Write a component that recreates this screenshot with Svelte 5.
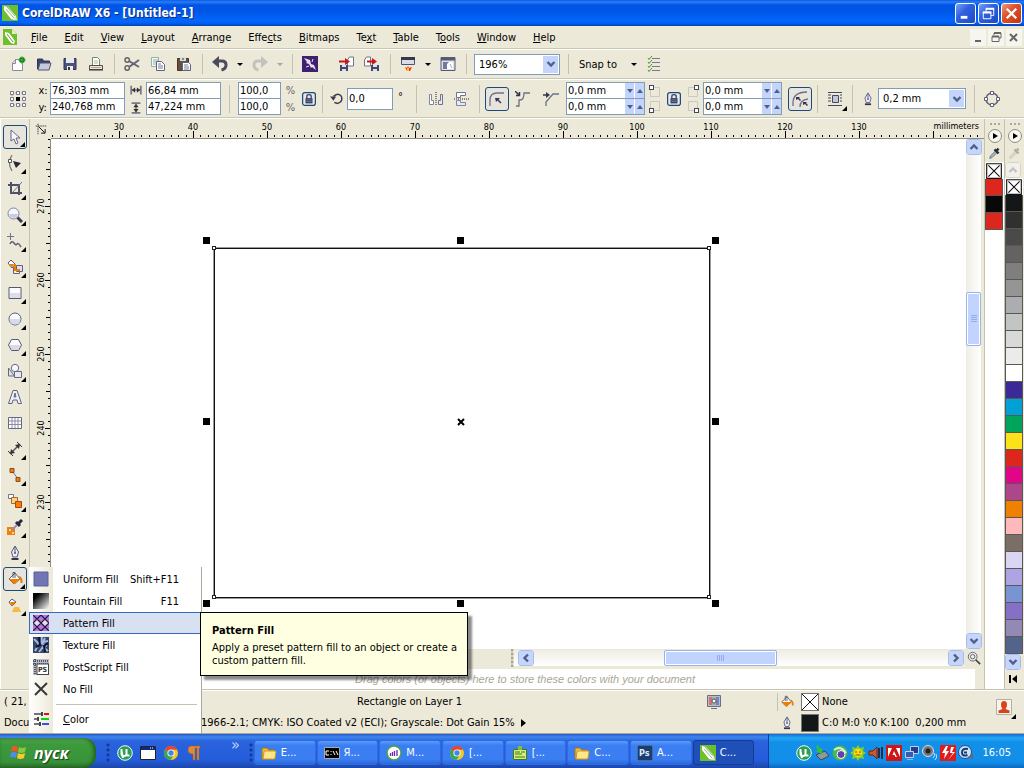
<script>
  const menus = [
    ['', 'F', 'ile'], ['', 'E', 'dit'], ['', 'V', 'iew'], ['', 'L', 'ayout'], ['', 'A', 'rrange'],
    ['Effe', 'c', 'ts'], ['', 'B', 'itmaps'], ['Te', 'x', 't'], ['', 'T', 'able'], ['T', 'o', 'ols'],
    ['', 'W', 'indow'], ['', 'H', 'elp']
  ];

  const bucket = '<path d="M2 8l6-6 5 6-6 5z" fill="#fff" stroke="#555a72"/><path d="M2 8h11l-5 5H7z" fill="#f27e00"/><path d="M6 7V1.500h2V7" fill="none" stroke="#555a72"/><path d="M12 6q3 1 2.500 6" fill="none" stroke="#e87c10" stroke-width="2"/>';
  const pen = '<path d="M8 1L4.500 7l1.500 5h4l1.500-5z" fill="#eef" stroke="#555a72"/><path d="M8 2v6" stroke="#555a72"/><circle cx="8" cy="8" r="1" fill="#555a72"/><path d="M4.500 13h7v2h-7z" fill="#33364a"/>';
  const folder = '<path d="M1 4q0-1 1-1h4l2 2h5q1 0 1 1v7q0 1-1 1H2q-1 0-1-1z" fill="#f3b93c" stroke="#a47814"/><path d="M2 14l1-7q0-1 1-1h10q1 0 1 1l-1 6q0 1-1 1z" fill="#ffe68a" stroke="#c9982c"/>';
  const chrome = '<circle cx="8" cy="8" r="7" fill="#f6c91f"/><path d="M8 8L1.900 4.500A7 7 0 0 1 14.100 4.500L8 4.500z" fill="#e2453a"/><path d="M1.900 4.500A7 7 0 0 0 7.500 15L11 9.700 8 8z" fill="#3ba357"/><path d="M1.900 4.500A7 7 0 0 1 14.100 4.500H8z" fill="#e2453a"/><circle cx="8" cy="8" r="3.600" fill="#fff"/><circle cx="8" cy="8" r="2.700" fill="#4086e8"/>';
  const torrent = '<circle cx="8" cy="8" r="7.300" fill="#2d9c55" stroke="#e8fff0"/><path d="M4.500 4v5q0 2 2.500 2t2.500-2V4M9.500 9q0 2 3 1.500M4.500 6l1.500 7" fill="none" stroke="#fff" stroke-width="2"/>';
  const corel = '<path d="M0 0h16v16H0z" fill="#6fbf2a"/><path d="M2 1l4 1 8 9-1 4-4-1-7-9z" fill="#fff"/><path d="M4 4l8 9M5 2l8 9" stroke="#6fa860" stroke-width=".8"/><path d="M11 15l3-4 1 4z" fill="#dfe8d8"/>';
  const dropper = '<path d="M2 14l1-3 6-6 2 2-6 6z" fill="#a9bcc0" stroke="#55707a"/><path d="M8 3l5 5M10 5l3-3" stroke="#2d2d42" stroke-width="3"/>';
  const disk = '<path d="M2 2.500h12v11H2z" fill="#4c5478" stroke="#2f3450"/><path d="M4 2h8v5H4z" fill="#e6e8f2"/><path d="M5 10h6v4H5z" fill="#eee"/><path d="M6 11h2v3H6z" fill="#2f3450"/>';

  const icons = {
    bucket, pen, folder, chrome, torrent, corel, dropper, disk,
    new: '<path d="M2.500 7l3-3.500h7v11h-10z" fill="#fff" stroke="#8a8c9c"/><path d="M2.500 7.500h3v-4" fill="#dde" stroke="#8a8c9c"/><circle cx="12" cy="4" r="3" fill="#188a1c"/><path d="M8 4h8M12 0v8" stroke="#4fb552" stroke-dasharray="2 1"/>',
    open: '<path d="M1.500 13V3h5l1 2h6v3" fill="#3c4568" stroke="#30385a"/><path d="M2 14l2-7h11l-2 7z" fill="#c5cbdc" stroke="#4c5478"/>',
    print: '<path d="M4.500 9V1.500h5l2 2V9" fill="#fff" stroke="#7d8090"/><path d="M6 5h4M6 7h4" stroke="#a8c46c"/><path d="M1.500 9.500h13v4h-13z" fill="#e8e8ee" stroke="#4a4c60"/><path d="M3 11.500h10" stroke="#e39a28"/><path d="M1 14h14" stroke="#333"/>',
    cut: '<path d="M5 5l10 6M5 11l10-7" stroke="#62657a" stroke-width="2"/><circle cx="3.200" cy="4" r="2.200" fill="none" stroke="#666" stroke-width="1.500"/><circle cx="3.200" cy="12" r="2.200" fill="none" stroke="#666" stroke-width="1.500"/>',
    copy: '<path d="M1.500 1.500h7v9h-7z" fill="#f2f6f4" stroke="#95b3ac"/><path d="M3 4h5M3 6h5M3 8h5" stroke="#8fb5a8"/><path d="M6.500 5.500h5l3 3v6h-8z" fill="#fff" stroke="#60637c"/><path d="M8 8h3M8 10h5M8 12h5" stroke="#777b98"/>',
    paste: '<path d="M1.500 2.500h11v12h-11z" fill="#65503c" stroke="#463626"/><path d="M4 1h6v4H4z" fill="#d7dfe0"/><circle cx="7" cy="3" r="1" fill="#478"/><path d="M6.500 6.500h6l2 2v6h-8z" fill="#fff" stroke="#60637c"/><path d="M8 9h4M8 11h5M8 13h5" stroke="#777b98"/>',
    undo: '<path d="M6 5h4q4 0 4 4t-4.500 5" fill="none" stroke="#4a4a5e" stroke-width="3"/><path d="M0 6l7-6v12z" fill="#4a4a5e"/>',
    redo: '<path d="M10 5H6Q2 5 2 9t4.500 5" fill="none" stroke="#c3c3be" stroke-width="3"/><path d="M16 6L9 0v12z" fill="#c3c3be"/>',
    connect: '<path d="M0 0h16v16H0z" fill="#40206e"/><path d="M2 2l6 2 1 4 3 1 2 5-4-3-1 1-2-4-3-1 1-1z" fill="#e8dcf6"/><path d="M11 3l-1 3M4 11l3-1" stroke="#e8dcf6"/>',
    import: '<path d="M9.500 4l2-3h4v9h-6z" fill="#fff" stroke="#707488"/><path d="M2 9h8v6H2z" fill="#3f4870"/><path d="M4 9h4v2H4zM4 13h4v2H4z" fill="#dde"/><path d="M1 5.500h7" stroke="#c8161c" stroke-width="2"/><path d="M7 2l5 3.500L7 9z" fill="#c8161c"/>',
    export: '<path d="M.5 4l2-3h4v9h-6z" fill="#fff" stroke="#707488"/><path d="M7 9h8v6H7z" fill="#3f4870"/><path d="M9 9h4v2H9zM9 13h4v2H9z" fill="#dde"/><path d="M3 5.500h6" stroke="#c8161c" stroke-width="2"/><path d="M8 2l5 3.500L8 9z" fill="#c8161c"/>',
    launcher: '<path d="M1.500 1.500h13v7h-13z" fill="#dcdce4" stroke="#50546a"/><path d="M1 1h14v3H1z" fill="#34384e"/><path d="M5 11l2 1 1-2 1 2 3-1-2 4H7z" fill="#ea3312"/><path d="M7 12h2v3H7z" fill="#ffc21b"/>',
    welcome: '<path d="M1 1.500h14v13H1z" fill="#dfe1ea" stroke="#565a74"/><path d="M1 2h14v2.500H1z" fill="#565a74"/><path d="M3 6h10v7H3z" fill="#707a9c"/><path d="M7 8l2-2h4v7H7z" fill="#fff"/><path d="M10 8l2 4" stroke="#8faec8"/>',
    options: '<path d="M6 2.500h8M6 6.500h8M6 10.500h8M6 14.500h8" stroke="#77798a"/><path d="M2 2l1 1.500L6 0M2 6l1 1.500L6 4M2 10l1 1.500L6 8M2 14l1 1.500L6 12" fill="none" stroke="#4d8d3b"/>',
    origin: '<path d="M2 2h12v12H2z" fill="none" stroke="#9a9caf" stroke-dasharray="2 1"/><g fill="#fff" stroke="#74778f"><path d="M.5 .5h3v3h-3zM6.500 .5h3v3h-3zM12.500 .5h3v3h-3zM.5 6.500h3v3h-3zM12.500 6.500h3v3h-3zM.5 12.500h3v3h-3zM6.500 12.500h3v3h-3zM12.500 12.500h3v3h-3z"/></g><path d="M6 6h4v4H6z"/>',
    width: '<path d="M2.500 3v10M13.500 3v10" stroke="#74778f" stroke-width="2"/><path d="M4 8h8" stroke="#222"/><path d="M3 8l4-3v6zM13 8l-4-3v6z" fill="#333"/>',
    height: '<path d="M3 2.500h10M3 13.500h10" stroke="#74778f" stroke-width="2"/><path d="M8 4v8" stroke="#222"/><path d="M8 3L5 7h6zM8 13L5 9h6z" fill="#333"/>',
    lock: '<rect x=".7" y=".7" width="14.600" height="14.600" rx="2.500" fill="#e6e8e9" stroke="#1d4a78" stroke-width="1.400"/><path d="M5.500 7V5q0-2 2.500-2t2.500 2v2" fill="none" stroke="#3a4060" stroke-width="1.500"/><path d="M4 7h8v6H4z" fill="#343a5c"/><path d="M5 9h6M5 11h6" stroke="#7d85a8"/>',
    rotate: '<path d="M4 5q6-5 9 0 2 6-4 8l-4-1" fill="none" stroke="#3a3c50" stroke-width="1.700"/><path d="M0 7h7L3 2z" fill="#3a3c50" transform="rotate(180 3.500 6)"/>',
    mirrorH: '<path d="M1.500 3.500h2v6h2v4h-4z" fill="#fff" stroke="#8185a0"/><path d="M8 1v14" stroke="#222" stroke-dasharray="1 1"/><path d="M14.500 3.500h-2v6h-2v4h4z" fill="#e6e8f4" stroke="#6f738c"/>',
    mirrorV: '<path d="M3.500 1.500h9v3h-5v2h-4z" fill="#fff" stroke="#6f738c"/><path d="M1 8h15" stroke="#222" stroke-dasharray="1 1"/><path d="M3.500 14.500h9v-3h-5v-2h-4z" fill="#e6e8f4" stroke="#8185a0"/>',
    round: '<path d="M1 15V9q0-7 7-7h7" fill="none" stroke="#6c7086" stroke-width="1.300"/><path d="M6 7h5l-1.500 1.500 3 3-1 1-3-3L7 11z" fill="#34384e"/>',
    scallop: '<path d="M1 15h3V9h1q4 0 4-7h6" fill="none" stroke="#6c7086" stroke-width="1.300"/><path d="M0 0l4 4M4.500 1v3.500H1" fill="none" stroke="#34384e" stroke-width="1.500"/>',
    chamfer: '<path d="M3 15v-4l7-8h6" fill="none" stroke="#6c7086" stroke-width="1.300"/><path d="M0 4h4" stroke="#34384e" stroke-width="1.500"/><path d="M3 1l4 3-4 3z" fill="#34384e"/>',
    relative: '<path d="M1 15V12Q1 1 15 1M8 16q0-7 8-8" fill="none" stroke="#6c7086" stroke-width="1.300"/><path d="M4 6h4L7 7l2 2-1 1-2-2-2 1zM11 11h4l-1 1 2 2-1 1-2-2-2 1z" fill="#34384e"/>',
    wrap: '<path d="M1 1.500h14M1 14.500h14M1 4h3M1 7h3M1 10h3M13 4h2M13 7h2M13 10h2" stroke="#44485e"/><path d="M5.500 4.500h6v7h-6z" fill="#c4c7da" stroke="#44485e"/>',
    curves: '<circle cx="8" cy="8" r="6" fill="none" stroke="#5e6278" stroke-width="1.500"/><g fill="#fff" stroke="#5e6278"><path d="M6.500 .5h3v3h-3zM6.500 12.500h3v3h-3zM.5 6.500h3v3h-3zM12.500 6.500h3v3h-3z"/></g>',
    pick: '<path d="M4 1v11l3-2 2 5 2-1-2-5h4z" fill="#f5f5fb" stroke="#656982"/>',
    shape: '<path d="M5 0Q0 8 5 16" fill="none" stroke="#6c7088" stroke-width="1.200"/><path d="M1.500 4.500h3v3h-3z" fill="#fff" stroke="#555"/><path d="M6 6l8 2-5 5z" fill="#25283a"/>',
    crop: '<path d="M1 4h11v10M4 1v11h11" fill="none" stroke="#4c5068" stroke-width="2"/><path d="M5 12L15 1" stroke="#6f738c"/>',
    zoom: '<path d="M10 10l5 5" stroke="#383b50" stroke-width="3"/><circle cx="6.500" cy="6.500" r="5.500" fill="#f6f7fc" stroke="#7f8399"/><path d="M2 7h9q-1 4-4.500 4T2 7z" fill="#c8cadf"/>',
    freehand: '<path d="M3.500 0v7M0 3.500h7" stroke="#6e728c"/><path d="M3 11q2-4 4-1t3 1 4 3" fill="none" stroke="#5b5f78" stroke-width="1.500"/>',
    smart: '<path d="M1 4l3-3 4 4-3 4z" fill="#fff" stroke="#555a72"/><path d="M2 5h5L5 8z" fill="#f27e00"/><path d="M6.500 8.500h6v6h-6z" fill="#f2f2fb" stroke="#60647c"/><path d="M9.500 6.500h6v6h-6z" fill="#dce0f2" stroke="#60647c"/><path d="M8 5v6h5" fill="none" stroke="#f27e00" stroke-width="2"/>',
    rect: '<path d="M2 2.500h12v11H2z" fill="#fafaff" stroke="#555a72"/><path d="M3 8h10v5H3z" fill="#dcdeea"/>',
    ellipse: '<circle cx="8" cy="8" r="6" fill="#fafaff" stroke="#555a72"/><path d="M2.500 8h11q0 5.500-5.500 5.500T2.500 8z" fill="#d8daea"/>',
    polygon: '<path d="M1.500 8l3-5.500h7l3 5.500-3 5.500h-7z" fill="#fafaff" stroke="#555a72"/><path d="M2.500 8h11L11 13H5z" fill="#d8daea"/>',
    shapes: '<path d="M1.500 5v8h6z" fill="#dcdeea" stroke="#656982"/><circle cx="8" cy="5" r="3.700" fill="#f6f7ff" stroke="#656982"/><path d="M7.500 8.500h7v6h-7z" fill="#e8eaf6" stroke="#656982"/>',
    text: '<path d="M1.500 14.500L6 1.500h4l4.500 13H11L10 11H6l-1 3.500zM7 8h2L8 4z" fill="#eef0fa" fill-rule="evenodd" stroke="#60647c"/>',
    table: '<path d="M1.500 2.500h13v11h-13z" fill="#fff" stroke="#656982"/><path d="M2 6h12M2 9.500h12M5 3v10M8 3v10M11 3v10" stroke="#8b8fa6"/>',
    dimension: '<path d="M3 13L13 3" stroke="#555" stroke-width="1.500"/><path d="M1 10l5 5M10 1l5 5" stroke="#333"/><path d="M3 13l1-5 4 4zM13 3l-1 5-4-4z" fill="#333"/>',
    connector: '<path d="M5 4l7 9" stroke="#6e728a"/><path d="M3 1.500h4v4H3zM9 10.500h4v4H9z" fill="#f27e00" stroke="#8c4c20"/>',
    interactive: '<path d="M1.500 1.500h5v4h-5z" fill="#fff" stroke="#70748c"/><path d="M4.500 4.500h6v6h-6z" fill="#ffd278" stroke="#a06a32"/><path d="M8.500 8.500h6v6h-6z" fill="#ff7800" stroke="#a04a18"/>',
    eyedropper: '<path d="M0 8h8v8H0z" fill="#f08010"/><path d="M2 10h2v2H2zM5 13h2v2H5z" fill="#fbd09c"/><path d="M5 11l5-5" stroke="#8f94ac" stroke-width="2"/><path d="M9 3l4 4M11 5l4-4" stroke="#26283a" stroke-width="3"/>',
    ifill: '<path d="M2 5l3-3 4 3-4 4z" fill="#fff" stroke="#555a72"/><path d="M3 5h6L5 9z" fill="#f27e00"/><path d="M7 10h5l2 5H5z" fill="#f7b948"/>',
    uniform: '<path d="M1 1h14v14H1z" fill="#7175b4" stroke="#5d609c"/>',
    texture: '<path d="M0 0h16v16H0z" fill="#35466e"/><path d="M1 2l5 5-4 7M9 0l-1 6 6 3M6 15l4-5 5 4M12 1l-2 4 5-1" fill="none" stroke="#a6b8de" stroke-width="2"/><path d="M6 0l1 8-4 2M15 6l-4 3 1 6" fill="none" stroke="#0c1430" stroke-width="2"/>',
    none: '<path d="M2 2l12 12M14 2L2 14" stroke="#383838" stroke-width="2"/>',
    sliders: '<path d="M1 3h7M1 8h3M1 13h5" stroke="#6f738a" stroke-width="2"/><path d="M11 3h5" stroke="#e01010" stroke-width="2"/><path d="M8 8h8" stroke="#10d010" stroke-width="2"/><path d="M9 13h7" stroke="#3050f0" stroke-width="2"/><path d="M8 1h2v4H8zM4 6h2v4H4zM6 11h2v4H6z" fill="#444"/>',
    magnifier: '<circle cx="6.500" cy="6.500" r="5" fill="#eee" stroke="#555a6c"/><circle cx="6.500" cy="6.500" r="2.500" fill="none" stroke="#555"/><path d="M10 10l5 5" stroke="#444" stroke-width="2"/>',
    monitor: '<path d="M1.500 1.500h13v11h-13z" fill="#b9bdd0" stroke="#6b6f86"/><path d="M3 3h3v8H3z" fill="#d46f74"/><path d="M6 3h4v8H6z" fill="#98b598"/><path d="M10 3h3v8h-3z" fill="#6e86c6"/><circle cx="8" cy="7" r="2" fill="#fff" stroke="#555"/><path d="M5 14.500h6" stroke="#6b6f86"/>',
    user: '<path d="M.5 .5h15v15H.5z" fill="#f6f4ee" stroke="#b4b0a4"/><path d="M8 2q3 0 3 3.500T9.500 10l4 1.500V14h-11v-2.500l4-1.500Q5 9 5 5.500T8 2z" fill="#d8431c"/>',
    origin2: '<path d="M4 1v14M1 4h14" stroke="#111" stroke-dasharray="2 1"/><path d="M5 5l8 8M13.500 8v5.500H8" fill="none" stroke="#111" stroke-width="1.300"/>',
    window: '<path d="M.5 1.500h15v13H.5z" fill="#fff" stroke="#222"/><path d="M1 2h14v3H1z" fill="#0a2a8a"/><path d="M10 3h1M12 3h1" stroke="#fff"/>',
    pilcrow: '<path d="M5 1h9v2h-1v12h-2V3H9v12H7V9Q2 9 2 5t3-4z" fill="#e08838" stroke="#a85a18" stroke-width=".5"/>',
    console: '<path d="M.5 2.500h15v11H.5z" fill="#000" stroke="#aaa"/><path d="M5 6H2v4h3M7 6v1M7 9v1M9 6l2 4M12 6l2 4" stroke="#fff" fill="none"/>',
    bars: '<circle cx="8" cy="8" r="7" fill="#fff" stroke="#48a348" stroke-width="1.500"/><path d="M4.500 8v3M6.500 7v4M8.500 6v5M11 5v6" stroke="#6a2ca0" stroke-width="1.300"/>',
    note: '<path d="M1.500 4.500h13v10h-13z" fill="#d4ee7a" stroke="#3d7a1a"/><path d="M6 1h4v4H6z" fill="#8bbb3a"/><path d="M3 7h5M9 7h4M3 9h7M3 12h10" stroke="#3d7a1a"/>',
    usb: '<path d="M2 10l9-4 4 5-8 4z" fill="#8d9a9a" stroke="#445"/><path d="M2 1l2 4-3 1 7 3V3L6 4 4 0z" fill="#35c03a"/>',
    globe: '<circle cx="8" cy="8" r="7.500" fill="#49b84a"/><path d="M2 5q7-5 12 3" stroke="#d8f0d0" fill="none" stroke-width="2"/><circle cx="9" cy="9.500" r="4" fill="#6040b0" stroke="#fff"/>',
    flower: '<path d="M8 0l2 3 4-1-1 4 3 2-3 2 1 4-4-1-2 3-2-3-4 1 1-4-3-2 3-2-1-4 4 1z" fill="#7ed321"/><circle cx="8" cy="8" r="4.200" fill="#ffd91c"/><path d="M6 6v2M10 6v2M5.500 10h5" stroke="#865a00"/>',
    volume: '<path d="M1 6h4l4-4v12l-4-4H1z" fill="#c65a30" stroke="#7a1f0c"/><path d="M11 3v10M14 2v12" stroke="#2a0c08" stroke-width="1.500"/>',
    adobe: '<path d="M0 0h16v16H0z" fill="#cf1616"/><path d="M2 3h4l-4 9zM14 3h-4l4 9zM8 6l3 6H9.500l-1-2H6.500z" fill="#fff"/>',
    network: '<path d="M6.500 1.500h8v7h-8z" fill="#22408a" stroke="#c5cee8"/><path d="M1.500 6.500h8v6h-8z" fill="#365ab4" stroke="#c5cee8"/><path d="M3 14.500h6" stroke="#aab"/>',
    speaker: '<circle cx="6" cy="6" r="5.500" fill="#73777c" stroke="#ddd"/><circle cx="6" cy="6" r="2.500" fill="#222"/><path d="M12 8q2 2-1 5M14 9q2 3-1 6" fill="none" stroke="#cde"/>',
    flash: '<path d="M0 0h16v16H0z" fill="#e01b1b"/><path d="M6 1L2 8h3l-1 6 5-8H6l2-5zM14 2h-3l-1 6h3l-5 7 7-8h-3z" fill="#fff"/>',
    disc: '<circle cx="7" cy="7" r="6.500" fill="#cfe2f2" stroke="#1f4c8c"/><path d="M10 4Q4 3 4 7.500T9.500 10M6 7.500h3" fill="none" stroke="#123a7a" stroke-width="2"/><path d="M10 12l5-3v5z" fill="#667"/>',
    page: '<path d="M1 0h9l5 5v11H1z" fill="#6fbf2a"/><path d="M3 3l4 1 6 8-1 3-3-1-6-8z" fill="#fff"/><path d="M5 5l6 8" stroke="#5c9b45"/><path d="M10 0v5h5z" fill="#dfeecb"/>'
  };

  const tools = [
    ['pick', 'Pick'], ['shape', 'Shape'], ['crop', 'Crop'], ['zoom', 'Zoom'], ['freehand', 'Freehand'],
    ['smart', 'Smart Fill'], ['rect', 'Rectangle'], ['ellipse', 'Ellipse'], ['polygon', 'Polygon'],
    ['shapes', 'Basic Shapes'], ['text', 'Text'], ['table', 'Table'], ['dimension', 'Dimension'],
    ['connector', 'Connector'], ['interactive', 'Blend'], ['eyedropper', 'Color Eyedropper'],
    ['pen', 'Outline Pen'], ['bucket', 'Fill'], ['ifill', 'Interactive Fill']
  ];

  const palette = [
    '#141717', '#30302f', '#4a4a4a', '#646362', '#7f7f7f', '#959596', '#abadb0', '#c3c5c4', '#d8dad9',
    '#ebebeb', '#ffffff', '#3a2996', '#00a2d6', '#00a45a', '#fce219', '#de271c', '#e30587', '#ab4889',
    '#f08100', '#ffb9bb', '#7b6e66', '#dad5f3', '#afa4e2', '#7894d2', '#866fc6', '#9389b5', '#52648b'
  ];
  const docPalette = ['#de271c', '#080808', '#de271c'];

  const tasks = [
    ['folder', 'E...'], ['console', 'Я...'], ['bars', 'M...'], ['chrome', '[...'],
    ['note', '[...'], ['folder', 'C...'], ['ps', 'A...'], ['corel', 'C...']
  ];
  const tray = ['torrent', 'usb', 'globe', 'flower', 'volume', 'adobe', 'network', 'speaker', 'flash', 'disc'];

  const fills = [
    ['uniform', 'Uniform Fill', 'Shift+F11'], ['fountain', 'Fountain Fill', 'F11'], ['pattern', 'Pattern Fill', ''],
    ['texture', 'Texture Fill', ''], ['postscript', 'PostScript Fill', ''], ['none', 'No Fill', '']
  ];

  // 10 mm is 74 px at the current zoom; the unit name takes the place of the label at 140
  const hTicks = Array.from({ length: 270 }, (_, i) => {
    const n = i - 9;
    const major = n % 10 === 0;
    return { x: Math.round(68 + n * 7.4), major, label: major && n < 110 ? 30 + n : null };
  });
  const vTicks = Array.from({ length: 66 }, (_, i) => {
    const n = i - 9;
    return { y: Math.round(67 + n * 7.4), half: n % 5 === 0, label: n % 10 === 0 && n < 50 ? 270 - n : null };
  });

  const handles = [[156, 101], [410, 101], [665, 101], [156, 282], [665, 282], [156, 464], [410, 464], [665, 464]];
  const nodes = [[163, 109], [658, 109], [163, 458], [658, 458]];

  let zoom = $state('196%');
  let outline = $state('0,2 mm');
  let activeFill = $state('pattern');
</script>

{#snippet icon(name)}
  <svg class="icon" viewBox="0 0 16 16" aria-hidden="true">
    {#if name === 'ps'}
      <rect width="16" height="16" fill="#1b3d70" stroke="#6f9cd0" />
      <text x="2" y="11" font-size="9" font-weight="bold" fill="#d8ecff">Ps</text>
    {:else if name === 'fountain'}
      <defs><linearGradient id="fountain" x2="1" y2="1"><stop offset=".2" /><stop offset="1" stop-color="#fff" /></linearGradient></defs>
      <rect width="16" height="16" fill="url(#fountain)" />
    {:else if name === 'pattern'}
      <rect width="16" height="16" fill="#b078e0" />
      <path d="M4 4l4 4-4 4-4-4zM12 4l4 4-4 4-4-4z" fill="#e4ddec" />
      <path d="M0 0l4 4 4 4 4 4 4 4M16 0L0 16M0 8l4-4 4-4M8 0l8 8-8 8-8-8" fill="none" stroke="#281438" stroke-width="1.200" />
    {:else if name === 'postscript'}
      <rect width="16" height="16" fill="#b9bcc6" />
      <path d="M0 2h16M0 5h16M2 0v16" stroke="#50546a" stroke-dasharray="1 1" stroke-width="2" />
      <rect x="4" y="5" width="11.500" height="10.500" fill="#fff" stroke="#444" />
      <text x="5" y="13" font-size="7" font-weight="bold" fill="#333">PS</text>
    {:else}
      {@html icons[name]}
    {/if}
  </svg>
{/snippet}

{#snippet chevron(dir)}
  <svg class="chevron {dir}" viewBox="0 0 10 10" aria-hidden="true"><path d="M1.500 3L5 6.500 8.500 3" fill="none" stroke="#4d6185" stroke-width="2.400" /></svg>
{/snippet}

{#snippet tool(name, label)}
  <button class="tool" aria-label={label}>{@render icon(name)}</button>
{/snippet}

{#snippet caret(label, off)}
  <button class="caret" class:off aria-label={label}></button>
{/snippet}

{#snippet pair(a, b, la, lb, spin)}
  <div class="pair">
    {#each [[a, la], [b, lb]] as [value, label]}
      <div class="field">
        <input type="text" {value} aria-label={label} />
        {#if spin}
          <button class="spin" aria-label="{label} down"><i class="down"></i></button>
          <button class="spin" aria-label="{label} up"><i class="up"></i></button>
        {/if}
      </div>
    {/each}
  </div>
{/snippet}

{#snippet cornerMarks(side)}
  <svg class="corners" viewBox="0 0 14 32" aria-hidden="true">
    <g fill="none" stroke="#cbc8c0"><path d="M2.500 4.500h9v9h-9zM2.500 18.500h9v9h-9z" /></g>
    <g fill="#fff" stroke="#44485e"><rect x={side === 'left' ? 1.5 : 8.5} y="2.500" width="4" height="4" /><rect x={side === 'left' ? 1.5 : 8.5} y="25.500" width="4" height="4" /></g>
  </svg>
{/snippet}

<div class="app">
  <header class="title">
    {@render icon('corel')}
    <h1>CorelDRAW X6 - [Untitled-1]</h1>
    <button class="win" aria-label="Minimize"><svg viewBox="0 0 20 20"><path d="M5 14h7" stroke="#fff" stroke-width="3" /></svg></button>
    <button class="win" aria-label="Restore"><svg viewBox="0 0 20 20"><path d="M7.500 8V5h8v7h-3M4.500 8.500h8v7h-8z" fill="none" stroke="#fff" /><path d="M7 5h9M4 9h9" stroke="#fff" stroke-width="2" /></svg></button>
    <button class="win close" aria-label="Close"><svg viewBox="0 0 20 20"><path d="M5 5l10 10M15 5L5 15" stroke="#fff" stroke-width="2.500" /></svg></button>
  </header>

  <nav class="menubar">
    {@render icon('page')}
    {#each menus as [a, key, b]}
      <button>{a}<u>{key}</u>{b}</button>
    {/each}
    <div class="doc-buttons">
      <button aria-label="Minimize document"><svg viewBox="0 0 16 16"><path d="M5 12h6" stroke="#666" stroke-width="2" /></svg></button>
      <button aria-label="Restore document"><svg viewBox="0 0 16 16"><path d="M6 6V4h7v5h-2M4 7.500h7v5H4z" fill="none" stroke="#666" /><path d="M6 4h7M4 7.500h7" stroke="#666" stroke-width="2" /></svg></button>
      <button aria-label="Close document"><svg viewBox="0 0 16 16"><path d="M4 5l7 7M11 5l-7 7" stroke="#666" stroke-width="2" /></svg></button>
    </div>
  </nav>

  <div class="bar standard">
    {@render tool('new', 'New')}
    {@render tool('open', 'Open')}
    {@render tool('disk', 'Save')}
    {@render tool('print', 'Print')}
    <span class="sep"></span>
    {@render tool('cut', 'Cut')}
    {@render tool('copy', 'Copy')}
    {@render tool('paste', 'Paste')}
    <span class="sep"></span>
    {@render tool('undo', 'Undo')}
    {@render caret('Undo list')}
    {@render tool('redo', 'Redo')}
    {@render caret('Redo list', true)}
    <span class="sep"></span>
    {@render tool('connect', 'Search content')}
    <span class="sep blank"></span>
    {@render tool('import', 'Import')}
    {@render tool('export', 'Export')}
    <span class="sep"></span>
    {@render tool('launcher', 'Application launcher')}
    {@render caret('Applications')}
    {@render tool('welcome', 'Welcome screen')}
    <span class="sep"></span>
    <div class="combo zoom">
      <select aria-label="Zoom level" bind:value={zoom}><option>196%</option><option>100%</option></select>
      <span class="drop">{@render chevron('down')}</span>
    </div>
    <span class="sep"></span>
    <button class="snap">Snap to <i class="tri"></i></button>
    {@render tool('options', 'Options')}
  </div>

  <div class="bar property">
    {@render tool('origin', 'Object origin')}
    <div class="stack"><span>x:</span><span>y:</span></div>
    {@render pair('76,303 mm', '240,768 mm', 'x', 'y')}
    <div class="stack small">{@render icon('width')}{@render icon('height')}</div>
    {@render pair('66,84 mm', '47,224 mm', 'Width', 'Height')}
    <span class="sep"></span>
    {@render pair('100,0', '100,0', 'Scale x', 'Scale y')}
    <div class="stack percent"><span>%</span><span>%</span></div>
    <button class="lock" aria-label="Lock ratio">{@render icon('lock')}</button>
    <span class="sep"></span>
    <div class="stack small">{@render icon('rotate')}</div>
    <input class="angle" type="text" value="0,0" aria-label="Angle of rotation" />
    <span class="degree">°</span>
    <span class="sep"></span>
    {@render tool('mirrorH', 'Mirror horizontally')}
    {@render tool('mirrorV', 'Mirror vertically')}
    <span class="sep"></span>
    <button class="tool on" aria-label="Round corner">{@render icon('round')}</button>
    {@render tool('scallop', 'Scalloped corner')}
    {@render tool('chamfer', 'Chamfered corner')}
    {@render pair('0,0 mm', '0,0 mm', 'Top left radius', 'Bottom left radius', true)}
    {@render cornerMarks('left')}
    <button class="lock" aria-label="Edit corners together">{@render icon('lock')}</button>
    {@render cornerMarks('right')}
    {@render pair('0,0 mm', '0,0 mm', 'Top right radius', 'Bottom right radius', true)}
    <button class="tool on last" aria-label="Relative corner scaling">{@render icon('relative')}</button>
    <span class="sep"></span>
    <button class="tool flyout" aria-label="Wrap text">{@render icon('wrap')}</button>
    <span class="sep"></span>
    <div class="stack small">{@render icon('pen')}</div>
    <div class="combo">
      <select aria-label="Outline width" bind:value={outline}><option>0,2 mm</option><option>0,5 mm</option></select>
      <span class="drop">{@render chevron('down')}</span>
    </div>
    <span class="sep"></span>
    {@render tool('curves', 'Convert to curves')}
  </div>

  <div class="body">
    <div class="workspace">
      <div class="toolbox">
        {#each tools as [name, label]}
          <button
            class="tool"
            class:on={name === 'pick' || name === 'bucket'}
            class:flyout={name !== 'text' && name !== 'table'}
            aria-label={label}
          >{@render icon(name)}</button>
        {/each}
      </div>

      <main class="drawing">
        <div class="ruler-corner">{@render icon('origin2')}</div>
        <div class="hruler">
          <svg>
            {#each hTicks as t}
              <rect x={t.x} y={t.major ? 12 : 16} width="1" height={t.major ? 8 : 2} />
              {#if t.label}<text x={t.x} y="11" text-anchor="middle">{t.label}</text>{/if}
            {/each}
          </svg>
          <span class="unit">millimeters</span>
        </div>
        <div class="vruler">
          <svg>
            {#each vTicks as t}
              <rect x={t.label ? 15 : t.half ? 16 : 18} y={t.y} width={t.label ? 5 : t.half ? 4 : 2} height="1" />
              {#if t.label}<text transform="translate(14 {t.y}) rotate(-90)" text-anchor="middle">{t.label}</text>{/if}
            {/each}
          </svg>
        </div>
        <div class="canvas">
          <svg aria-label="Drawing page">
            <rect x="163" y="109" width="496" height="350" fill="none" stroke="#999" stroke-width="2" />
            <rect x="163.500" y="109.500" width="495" height="349" fill="none" stroke="#111" />
            {#each handles as [x, y]}<rect x={x - 4} y={y - 3} width="7" height="7" />{/each}
            {#each nodes as [x, y]}<rect x={x - 1.5} y={y - 1.5} width="3" height="3" fill="#fff" stroke="#222" />{/each}
            <path d="M407 280l6 6M413 280l-6 6" stroke="#000" stroke-width="2" />
          </svg>
        </div>
        <div class="scroll vertical">
          <button aria-label="Scroll up">{@render chevron('up')}</button>
          <span class="track before"></span>
          <span class="thumb"></span>
          <span class="track"></span>
          <button aria-label="Scroll down">{@render chevron('down')}</button>
        </div>
        <div class="bottom">
          <div class="pages"></div>
          <div class="scroll horizontal">
            <button aria-label="Scroll left">{@render chevron('left')}</button>
            <span class="track before"></span>
            <span class="thumb"></span>
            <span class="track"></span>
            <button aria-label="Scroll right">{@render chevron('right')}</button>
          </div>
          <button class="nav" aria-label="Navigator">{@render icon('magnifier')}</button>
        </div>
        <div class="doc-colors">Drag colors (or objects) here to store these colors with your document</div>
      </main>

      {#each [docPalette, palette] as colors, i}
        <aside class="colors">
          <div class="grip"></div>
          <button class="play" aria-label="Palette menu"><i></i></button>
          <button class="pick" class:off={i === 1} aria-label="Pick color">{@render icon('dropper')}</button>
          {#if i === 1}<button class="step off" aria-label="Previous colors">{@render chevron('up')}</button>{/if}
          <button class="swatch empty" aria-label="No color"><svg viewBox="0 0 16 16"><path d="M1.500 1.500h13v13h-13zM3 3l10 10M13 3L3 13" fill="none" stroke="#111" /></svg></button>
          {#each colors as color}
            <button class="swatch" style:background={color} aria-label={color}></button>
          {/each}
          {#if i === 1}
            <button class="step" aria-label="Next colors">{@render chevron('down')}</button>
            <button class="rewind" aria-label="Expand palette"><svg viewBox="0 0 10 10"><path d="M1 1h2v8H1zM9 1v8L4 5z" /></svg></button>
          {/if}
        </aside>
      {/each}
    </div>

    <footer class="status">
      <span class="coords">( 21,</span>
      <span class="object">Rectangle on Layer 1</span>
      <span class="proof">{@render icon('monitor')}</span>
      <span class="paint divided">{@render icon('bucket')}<svg class="chip" viewBox="0 0 16 16"><path d="M0 0l16 16M16 0L0 16" stroke="#111" /></svg>None</span>
      <span class="profile"><span>Docu</span>1966-2.1; CMYK: ISO Coated v2 (ECI); Grayscale: Dot Gain 15% <i></i></span>
      <span class="paint">{@render icon('pen')}<span class="chip black"></span>C:0 M:0 Y:0 K:100 &nbsp;0,200 mm</span>
      <button class="tool flyout account" aria-label="Account">{@render icon('user')}</button>
    </footer>

    <div class="flyout-menu" role="menu">
      {#each fills as [name, label, key]}
        <button role="menuitem" class:active={activeFill === name} onclick={() => (activeFill = name)}>
          {@render icon(name)}<span>{label}</span><kbd>{key}</kbd>
        </button>
      {/each}
      <hr />
      <button role="menuitem">{@render icon('sliders')}<span><u>C</u>olor</span></button>
    </div>

    <div class="tooltip" role="tooltip">
      <strong>Pattern Fill</strong>
      <p>Apply a preset pattern fill to an object or create a custom pattern fill.</p>
    </div>
  </div>

  <div class="taskbar">
    <button class="start">
      <svg viewBox="0 0 20 20" aria-hidden="true">
        <path d="M3 4q3-2 6 0L8 9q-3-2-6 0z" fill="#f0552a" /><path d="M10 4q3 2 7 0l-1 5q-4 2-7 0z" fill="#86c93c" />
        <path d="M2 10q3-2 6 0l-1 5q-3-2-6 0z" fill="#4f8cf0" /><path d="M9 10q3 2 7 0l-1 5q-4 2-7 0z" fill="#fbc92c" />
      </svg>
      пуск
    </button>
    <div class="quick">
      <span class="dots"></span>
      {#each ['torrent', 'window', 'chrome', 'pilcrow'] as name}
        <button aria-label={name}>{@render icon(name)}</button>
      {/each}
      <span class="more">»</span>
      <span class="dots"></span>
    </div>
    <div class="tasks">
      {#each tasks as [name, label], i}
        <button class:current={i === tasks.length - 1}>{@render icon(name)}{label}</button>
      {/each}
    </div>
    <div class="tray">
      {#each tray as name}{@render icon(name)}{/each}
      <time>16:05</time>
    </div>
  </div>
</div>

<style>
  :global(body) {
    margin: 0;
    overflow: hidden;
  }

  .app {
    display: flex;
    flex-direction: column;
    min-height: 100vh;
    background: #ece9d8;
    color: #000;
    font: 11px/13px "DejaVu Sans Condensed", "DejaVu Sans", sans-serif;
    cursor: default;
  }

  .app * { box-sizing: border-box; }

  button, input, select {
    margin: 0;
    padding: 0;
    border: 0;
    border-radius: 0;
    background: none;
    color: inherit;
    font: inherit;
  }

  svg { display: block; }

  .icon {
    width: 16px;
    height: 16px;
    flex: none;
  }

  .chevron { width: 10px; height: 10px; }
  .chevron.up { transform: rotate(180deg); }
  .chevron.left { transform: rotate(90deg); }
  .chevron.right { transform: rotate(-90deg); }

  /* title */
  .title {
    display: flex;
    align-items: center;
    height: 26px;
    padding: 0 2px;
    gap: 2px;
    background: linear-gradient(#0a5ce6 0, #2a7cf6 2px, #0054e3 5px, #0056e8 12px, #0266fe 20px, #0262f4 23px, #0140b4 26px);
  }

  h1 {
    flex: 1;
    margin: 0;
    padding-left: 2px;
    color: #fff;
    font-size: 12px;
    font-weight: bold;
    text-shadow: 1px 1px #0a2c7c;
  }

  .win {
    width: 21px;
    height: 21px;
    border: 1px solid #fff;
    border-radius: 3px;
    background: linear-gradient(135deg, #7ba0f5, #2f62e0 40%, #1c49c8);
  }

  .close { background: linear-gradient(135deg, #f0987c, #e0512c 40%, #c23412); }

  /* menu */
  .menubar {
    display: flex;
    align-items: center;
    height: 23px;
    padding: 0 2px;
    border-bottom: 1px solid #cac6b4;
  }

  .menubar > button {
    margin-left: 17px;
    height: 20px;
  }

  .menubar .icon + button { margin-left: 13px; }

  .doc-buttons {
    display: flex;
    gap: 2px;
    margin-left: auto;
  }

  .doc-buttons button {
    width: 16px;
    height: 17px;
    background: #f6f5ee;
  }

  /* bars */
  .bar {
    align-items: center;
    border-top: 1px solid #fff;
    border-bottom: 1px solid #cac6b4;
  }

  .standard {
    display: flex;
    height: 30px;
    padding-left: 5px;
  }

  .property {
    display: grid;
    grid-template-columns:
      36px 14px 75px 21px 75px 17px 43px 19px 18px 8px 21px 46px 15px 16px 24px 26px 10px
      26px 26px 30px 79px 20px 18px 20px 79px 30px 10px 26px 9px 21px 88px 16px 20px;
    justify-items: center;
    height: 39px;
  }

  .tool {
    display: grid;
    place-items: center;
    position: relative;
    width: 26px;
    height: 26px;
    flex: none;
  }

  .tool.on {
    width: 24px;
    height: 24px;
    border: 1px solid #1c4a7c;
    border-radius: 3px;
    background: #e6e4dc;
  }

  .last { justify-self: end; }

  .flyout::after {
    content: '';
    position: absolute;
    right: 1px;
    bottom: 1px;
    border-left: 5px solid transparent;
    border-bottom: 5px solid #000;
  }

  .sep {
    width: 10px;
    height: 20px;
    flex: none;
    background: linear-gradient(#c5c2b0, #c5c2b0) center / 1px 100% no-repeat;
  }

  .property .sep { width: 8px; height: 28px; }
  .sep.blank { background: none; }

  .caret {
    width: 14px;
    height: 26px;
    display: grid;
    place-items: center;
  }

  .caret::after, .tri {
    content: '';
    border: 3px solid transparent;
    border-top-color: #000;
    border-bottom: 0;
  }

  .caret.off::after { border-top-color: #aaa79a; }

  .combo {
    position: relative;
    width: 88px;
    height: 21px;
    border: 1px solid #7f9db9;
    background: #fff;
  }

  .combo.zoom { width: 86px; margin: 0 3px; }

  .combo select {
    appearance: none;
    width: 100%;
    height: 100%;
    padding-left: 4px;
  }

  .drop {
    position: absolute;
    top: 1px;
    right: 1px;
    bottom: 1px;
    width: 15px;
    display: grid;
    place-items: center;
    background: #c5d4fb;
    pointer-events: none;
  }

  .snap {
    display: flex;
    align-items: center;
    gap: 14px;
    margin: 0 4px 0 6px;
  }

  .stack {
    display: flex;
    flex-direction: column;
    gap: 4px;
  }

  .small .icon { width: 14px; height: 14px; }
  .percent { color: #666; }
  .lock .icon { width: 14px; height: 14px; }
  .corners { width: 14px; height: 32px; }

  .degree {
    align-self: start;
    padding-top: 10px;
  }

  .pair {
    width: 100%;
    border: 1px solid #7f9db9;
    background: #fff;
  }

  .field {
    display: flex;
    height: 15px;
    gap: 1px;
  }

  .field + .field {
    height: 16px;
    border-top: 1px solid #7f9db9;
  }

  .field input {
    flex: 1;
    min-width: 0;
    padding-left: 1px;
  }

  .spin {
    display: grid;
    place-items: center;
    width: 9px;
    background: #c5d4fb;
  }

  .spin i { border: 3px solid transparent; }
  .spin .down { border-top: 4px solid #4d6185; border-bottom: 0; }
  .spin .up { border-bottom: 4px solid #4d6185; border-top: 0; }

  .angle {
    width: 100%;
    height: 22px;
    padding-left: 1px;
    border: 1px solid #7f9db9;
    background: #fff;
  }

  /* workspace */
  .body {
    display: flex;
    flex: 1;
    flex-direction: column;
    position: relative;
  }

  .workspace {
    display: flex;
    flex: 1;
    border-top: 1px solid #fff;
    border-bottom: 1px solid #c5c2b0;
  }

  .toolbox {
    display: flex;
    flex-direction: column;
    align-items: center;
    gap: 2px;
    width: 30px;
    padding-top: 6px;
    border-left: 1px solid #fff;
    border-right: 1px solid #c5c2b0;
  }

  .toolbox .tool { width: 24px; height: 24px; }

  .drawing {
    display: grid;
    flex: 1;
    grid-template: 20px 1fr 20px 20px / 21px 1fr 18px;
    min-width: 0;
  }

  .ruler-corner {
    display: grid;
    place-items: center;
  }

  .ruler-corner .icon { width: 12px; height: 12px; }

  .hruler {
    grid-column: 2 / 4;
    position: relative;
    padding-right: 6px;
    border-bottom: 1px solid #8f8c7e;
  }

  .hruler svg, .vruler svg, .canvas svg {
    width: 100%;
    height: 100%;
    overflow: hidden;
  }

  .hruler text, .vruler text { font-size: 9px; }

  .unit {
    position: absolute;
    top: 1px;
    right: 5px;
    font-size: 9px;
    line-height: 12px;
  }

  .vruler { border-right: 1px solid #8f8c7e; }

  .vruler, .canvas {
    position: relative;
    overflow: hidden;
  }

  .vruler svg, .canvas svg { position: absolute; }
  .canvas { background: #fff; }

  .scroll {
    display: flex;
    background: #f7f6f0;
  }

  .scroll button, .step {
    display: grid;
    place-items: center;
    flex: none;
    width: 16px;
    height: 16px;
    border: 1px solid #fff;
    border-radius: 3px;
    outline: 1px solid #a9bdea;
    outline-offset: -1px;
    background: #c5d5fc;
  }

  .track { flex: 1; }

  .thumb {
    flex: none;
    border: 1px solid #98b2ea;
    border-radius: 2px;
    box-shadow: inset 0 0 0 1px #fff;
  }

  .vertical {
    flex-direction: column;
    align-items: center;
    border-right: 3px solid #ece9d8;
    background: linear-gradient(90deg, #eeede5, #fff);
  }

  .vertical .before { flex: none; height: 137px; }

  .vertical .thumb {
    width: 15px;
    height: 54px;
    background: repeating-linear-gradient(#8eaaf0 0 1px, transparent 1px 2px) center / 6px 8px no-repeat, #c2d3fd;
  }

  .bottom {
    grid-column: 1 / 4;
    display: flex;
    align-items: center;
    border-bottom: 2px solid #ece9d8;
  }

  .pages {
    flex: 0 0 484px;
    align-self: stretch;
    background: radial-gradient(circle at 1px 2px, #aaa798 1px, transparent 2px) right / 3px 4px repeat-y;
  }

  .horizontal {
    flex: 1;
    padding-left: 4px;
    background: linear-gradient(#eeede5, #fff);
  }

  .horizontal .before { flex: none; width: 130px; }

  .horizontal .thumb {
    width: 113px;
    height: 16px;
    background: repeating-linear-gradient(90deg, #8eaaf0 0 1px, transparent 1px 2px) center / 8px 6px no-repeat, #c2d3fd;
  }

  .nav { width: 20px; padding-left: 3px; }
  .nav .icon { width: 14px; height: 14px; }

  .doc-colors {
    grid-column: 1 / 4;
    padding-left: 45px;
    border-right: 9px solid #ece9d8;
    background: #fff;
    color: #a9a695;
    font-family: "Liberation Sans", Arial, sans-serif;
    font-style: italic;
    line-height: 20px;
    text-align: center;
  }

  /* palettes */
  .colors {
    display: flex;
    flex-direction: column;
    width: 20px;
    border-left: 1px solid #c5c2b0;
    background: #fff;
  }

  .colors + .colors { background: #ece9d8; }

  .grip {
    height: 8px;
    background: radial-gradient(circle at 2px 1px, #aca899 1px, transparent 2px) center 3px / 4px 3px no-repeat, #ece9d8;
    background: repeating-linear-gradient(90deg, #aca899 0 2px, transparent 2px 4px) center 4px / 10px 2px no-repeat, #ece9d8;
  }

  .play {
    display: grid;
    place-items: center;
    height: 18px;
    background: #ece9d8;
  }

  .play i {
    width: 14px;
    height: 14px;
    border: 1px solid #8e8b80;
    border-radius: 50%;
    background: #f8f7f2;
  }

  .play i::after {
    content: '';
    display: block;
    margin: 3px 0 0 4px;
    border-left: 5px solid #000;
    border-top: 3px solid transparent;
    border-bottom: 3px solid transparent;
  }

  .pick {
    display: grid;
    place-items: center;
    height: 17px;
    background: #ece9d8;
  }

  .pick .icon { width: 13px; height: 13px; }
  .pick.off .icon { opacity: .3; filter: grayscale(1); }

  .step.off { background: #f2f0e8; outline-color: #d8d5c6; }
  .step.off .chevron { opacity: .3; }

  .swatch {
    flex: none;
    width: 18px;
    height: 17px;
    border: 1px solid #585858;
    border-top: 0;
  }

  .empty { background: #fff; border: 0; }

  .rewind {
    display: grid;
    place-items: center;
    width: 16px;
    height: 18px;
  }

  .rewind svg { width: 10px; height: 10px; }

  /* status */
  .status {
    display: grid;
    grid-template: 21px 21px / 201px 1fr 160px 206px 40px;
    align-items: center;
    height: 44px;
    border-top: 1px solid #fff;
    border-bottom: 1px solid #aca899;
  }

  .coords { padding-left: 4px; }
  .object { text-align: center; }
  .proof { padding-left: 88px; }

  .paint {
    display: flex;
    align-items: center;
    gap: 3px;
  }

  .divided { box-shadow: -1px 0 #c5c2b0; }

  .paint .icon { margin: 0 4px 0 2px; width: 14px; height: 14px; }

  .chip {
    width: 18px;
    height: 18px;
    border: 1px solid #777;
    background: #fff;
  }

  .black { background: #141717; }

  .profile {
    grid-column: 1 / 4;
    grid-row: 2;
    display: flex;
    align-items: center;
    white-space: nowrap;
  }

  .profile span {
    width: 201px;
    padding-left: 4px;
  }

  .profile i {
    margin-left: 6px;
    border-left: 5px solid #000;
    border-top: 4px solid transparent;
    border-bottom: 4px solid transparent;
  }

  .status .paint { grid-column: 4; }

  .account {
    grid-column: 5;
    grid-row: 1 / 3;
    align-self: start;
    justify-self: center;
    margin-top: 3px;
  }

  /* fill menu */
  .flyout-menu {
    position: absolute;
    left: 29px;
    bottom: 1px;
    width: 173px;
    padding: 1px 0 3px;
    border-right: 1px solid #aca899;
    background: linear-gradient(90deg, #fff, #ece9d8 24px, #fff 24px);
  }

  .flyout-menu button {
    display: flex;
    align-items: center;
    width: 100%;
    height: 22px;
    padding: 0 21px 0 3px;
    border: 1px solid transparent;
    text-align: left;
  }

  .flyout-menu .active {
    border-color: #316ac5;
    background: #d8e1f2;
  }

  .flyout-menu span { flex: 1; padding-left: 14px; }
  .flyout-menu kbd { font: inherit; }

  .flyout-menu hr {
    margin: 4px 4px 3px 27px;
    border: 0;
    border-top: 1px solid #c5c2b0;
  }

  .tooltip {
    position: absolute;
    left: 200px;
    bottom: 58px;
    width: 268px;
    height: 64px;
    padding: 11px 4px 11px 11px;
    border: 1px solid #000;
    background: #ffffe1;
    box-shadow: 4px 4px 2px rgba(0, 0, 0, .45);
  }

  .tooltip p { margin: 4px 0 0; }

  /* taskbar */
  .taskbar {
    display: flex;
    align-items: stretch;
    height: 34px;
    background: linear-gradient(#2458c8 0, #3f86ee 3px, #2a63dc 7px, #245cdb 26px, #1c46a8);
    color: #fff;
  }

  .start {
    display: flex;
    align-items: center;
    gap: 5px;
    width: 96px;
    margin-top: 4px;
    padding-left: 9px;
    border-radius: 0 12px 12px 0;
    background: linear-gradient(#5aa758, #3c9a3c 20%, #38923a 80%, #2a6f2a);
    box-shadow: inset -2px 0 4px #1c5a1c;
    font: italic bold 16px/20px "Open Sans", sans-serif;
    text-shadow: 1px 1px 1px #143c14;
  }

  .start svg { width: 20px; height: 20px; }

  .quick {
    display: flex;
    align-items: center;
    gap: 7px;
    padding: 4px 1px 0 10px;
  }

  .dots {
    width: 4px;
    height: 20px;
    background: radial-gradient(circle at 2px 2px, #123a94 1px, transparent 2px) 0 0 / 4px 5px;
  }

  .more { align-self: start; margin: 0 2px 0 22px; color: #b8d4ff; font-size: 16px; }

  .tasks {
    display: flex;
    flex: 1;
    gap: 1px;
    padding: 6px 14px 3px 0;
  }

  .tasks button {
    display: flex;
    flex: 0 1 62px;
    align-items: center;
    gap: 4px;
    padding-left: 6px;
    border: 1px solid #2f6ae6;
    border-radius: 3px;
    background: linear-gradient(#5a9cfc, #3a7ef2 20%, #3a7ef2 80%, #2c68d8);
  }

  .tasks .current {
    border-color: #143c94;
    background: #1e50b8;
  }

  .tray {
    display: flex;
    align-items: center;
    gap: 2px;
    padding: 3px 13px 0 27px;
    border-left: 1px solid #0c3a9c;
    background: linear-gradient(#1a6ad0 0, #22a8f4 4px, #1290e8 8px, #128ee8 28px, #0c68c0);
  }

  time { margin-left: 6px; }
</style>
